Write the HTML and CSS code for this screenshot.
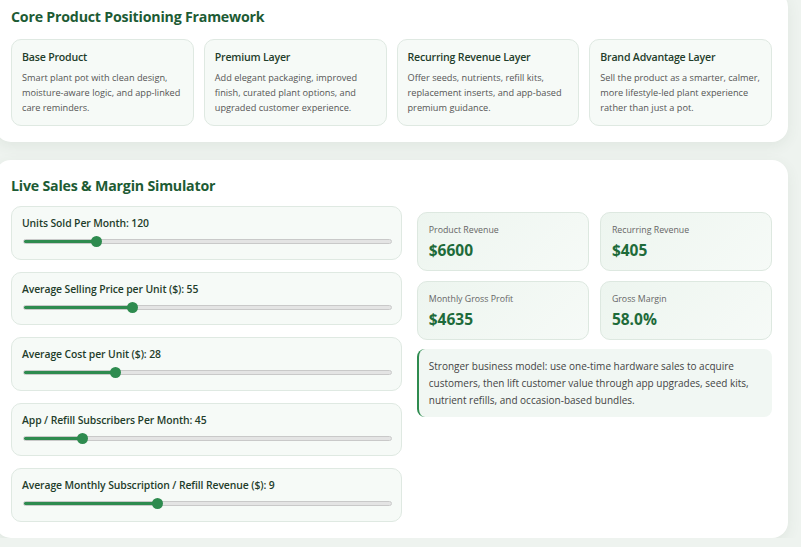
FILE: index.html
```html
<!DOCTYPE html>
<html lang="en">
<head>
  <meta charset="UTF-8" />
  <title>Smart Plant Pot – Product Model</title>
  <link rel="stylesheet" href="styles.css">
</head>
<body>
  <div class="page">

    <!-- positioning layers -->
    <section class="panel">
      <h2>Core Product Positioning Framework</h2>
      <div class="layers">
        <div class="layer">
          <h3>Base Product</h3>
          <p>Smart plant pot with clean design, moisture-aware logic, and app-linked care reminders.</p>
        </div>
        <div class="layer">
          <h3>Premium Layer</h3>
          <p>Add elegant packaging, improved finish, curated plant options, and upgraded customer experience.</p>
        </div>
        <div class="layer">
          <h3>Recurring Revenue Layer</h3>
          <p>Offer seeds, nutrients, refill kits, replacement inserts, and app-based premium guidance.</p>
        </div>
        <div class="layer">
          <h3>Brand Advantage Layer</h3>
          <p>Sell the product as a smarter, calmer, more lifestyle-led plant experience rather than just a pot.</p>
        </div>
      </div>
    </section>

    <!-- simulator -->
    <section class="panel">
      <h2 class="sim-title">Live Sales &amp; Margin Simulator</h2>
      <div class="sim">
        <div class="controls">
          <div class="control">
            <label>Units Sold Per Month: <span>120</span></label>
            <input type="range" min="0" max="640" value="120" style="--p: 19.5%">
          </div>
          <div class="control">
            <label>Average Selling Price per Unit ($): <span>55</span></label>
            <input type="range" min="10" max="165" value="55" style="--p: 29%">
          </div>
          <div class="control">
            <label>Average Cost per Unit ($): <span>28</span></label>
            <input type="range" min="5" max="100" value="28" style="--p: 24.5%">
          </div>
          <div class="control">
            <label>App / Refill Subscribers Per Month: <span>45</span></label>
            <input type="range" min="0" max="300" value="45" style="--p: 15%">
          </div>
          <div class="control">
            <label>Average Monthly Subscription / Refill Revenue ($): <span>9</span></label>
            <input type="range" min="0" max="25" value="9" style="--p: 36%">
          </div>
        </div>

        <div class="results">
          <div class="stats">
            <div class="stat">
              <div class="stat-label">Product Revenue</div>
              <div class="stat-value">$6600</div>
            </div>
            <div class="stat">
              <div class="stat-label">Recurring Revenue</div>
              <div class="stat-value">$405</div>
            </div>
            <div class="stat">
              <div class="stat-label">Monthly Gross Profit</div>
              <div class="stat-value">$4635</div>
            </div>
            <div class="stat">
              <div class="stat-label">Gross Margin</div>
              <div class="stat-value">58.0%</div>
            </div>
          </div>
          <div class="note">
            Stronger business model: use one-time hardware sales to acquire customers, then lift customer value through app upgrades, seed kits, nutrient refills, and occasion-based bundles.
          </div>
        </div>
      </div>
    </section>

  </div>
</body>
</html>
```

FILE: styles.css
```css
/* base */
body {
  margin: 0;
  font-family: 'Open Sans', 'Noto Sans', sans-serif;
  background-color: #eef3ef;
  color: #333;
  overflow: hidden;
}

.page {
  display: flex;
  flex-direction: column;
  gap: 18px;
  margin: -9px 13px 0 -5px;
}

/* white panels */
.panel {
  background-color: #ffffff;
  border-radius: 16px;
  padding: 16px;
  box-shadow: 0 4px 14px rgba(60, 90, 70, 0.08);
}

.panel h2 {
  margin: 0 0 12px;
  font-size: 14.2px;
  line-height: 20px;
  font-weight: 700;
  color: #1d5b34;
  letter-spacing: -0.2px;
}
.panel h2.sim-title {
  margin-bottom: 10px;
}

/* positioning layers */
.layers {
  display: grid;
  grid-template-columns: repeat(4, 1fr);
  gap: 10px;
}

.layer {
  background-color: #f6faf7;
  border: 1px solid #dfe9e2;
  border-radius: 10px;
  padding: 9px 10px 10px;
}
.layer h3 {
  margin: 0 0 5px;
  font-size: 10.6px;
  line-height: 16px;
  font-weight: 600;
  letter-spacing: -0.2px;
  color: #1f3d2b;
}
.layer p {
  margin: 0;
  font-size: 9.2px;
  line-height: 15px;
  color: #555;
}

/* simulator */
.sim {
  display: grid;
  grid-template-columns: 1.1fr 1fr;
  gap: 15px;
  align-items: start;
}

.controls {
  display: flex;
  flex-direction: column;
  gap: 12px;
}

.control {
  background-color: #f6faf7;
  border: 1px solid #dfe9e2;
  border-radius: 10px;
  padding: 8px 8px 11.5px 10px;
}
.control label {
  display: block;
  font-size: 10.4px;
  line-height: 16px;
  font-weight: 600;
  letter-spacing: -0.1px;
  color: #1f3d2b;
}

/* sliders */
.control input[type="range"] {
  -webkit-appearance: none;
  appearance: none;
  display: block;
  width: calc(100% - 2px);
  height: 5px;
  margin: 8px 0 3px 1px;
  border-radius: 3px;
  border: 1px solid #c9c9c9;
  background: linear-gradient(to right, #2e8b4f var(--p), #e4e4e4 var(--p));
  box-sizing: border-box;
}
.control input[type="range"]::-webkit-slider-thumb {
  -webkit-appearance: none;
  width: 11px;
  height: 11px;
  border-radius: 50%;
  background-color: #2e8b4f;
  border: none;
}

/* results */
.results {
  padding-top: 6px;
}

.stats {
  display: grid;
  grid-template-columns: 1fr 1fr;
  gap: 10px 11px;
}

.stat {
  background: linear-gradient(135deg, #edf5ef, #f6faf7);
  border: 1px solid #dde8e0;
  border-radius: 10px;
  padding: 10px 11px 10px;
}
.stat-label {
  font-size: 8.8px;
  line-height: 14px;
  color: #666;
}
.stat-value {
  margin-top: 3px;
  font-size: 15.5px;
  line-height: 20px;
  font-weight: 700;
  color: #1e6b3a;
}

.note {
  margin-top: 9px;
  background-color: #f1f7f3;
  border-left: 2px solid #2e8b4f;
  border-radius: 8px;
  padding: 9px 12px 8px 10px;
  font-size: 10px;
  line-height: 17px;
  color: #444;
}
```
